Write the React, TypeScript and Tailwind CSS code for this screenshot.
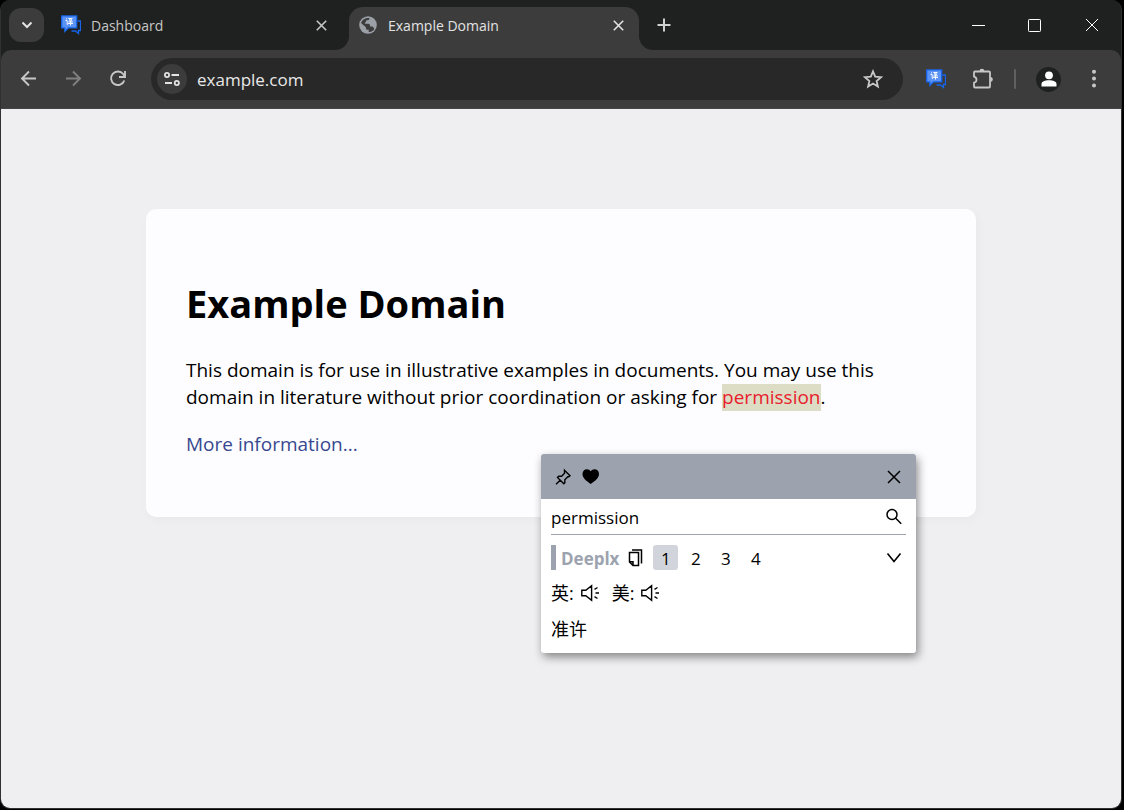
import type { ReactNode } from "react";

function TranslateLogo() {
  return (
    <svg viewBox="0 0 20 20" className="size-5 shrink-0" aria-hidden="true">
      <path d="M16.500 6h3v9.500h-2v3l-3-2.500H10.500" fill="none" stroke="#1765ea" strokeWidth="1.300" />
      <path d="M.700.900h15v12H7.500l-3.700 3.600v-3.600H.7z" fill="#5b92f5" stroke="#1765ea" strokeWidth="1.300" />
      <g stroke="#f2f6ff" strokeWidth="1" fill="none">
        <path d="M5 3.500l1 .8M4.500 5.500h1.700v4l1-.7M7.300 3.500h4L8 6.300M8 4l3.500 2.400M7.300 7h4.300M7 8.500h5M9.500 6v4.500" />
      </g>
    </svg>
  );
}

function Globe() {
  return (
    <svg viewBox="0 0 18 18" className="size-[18px] shrink-0" aria-hidden="true">
      <circle cx="9" cy="9" r="8.800" fill="#9aa0a6" />
      <path
        d="M2.300 6.300C3.500 3.500 6 1.900 9 1.900h1.500c0 1.700-.8 2.400-2.500 2.400-.8 0-1 .5-1 1.200s-.4 1-1.100 1v1.300h3.300c1.200 0 1.900.8 1.900 2v.7h1.700c1 0 1.600.5 1.900 1.500l.6 1.200c-1.300 1.800-3.300 2.900-5.600 2.900v-2.400H8.300c-.8 0-1.400-.6-1.400-1.400v-1L2.300 7.200z"
        fill="#3c3c3c"
      />
    </svg>
  );
}

function Cross({ className }: { className: string }) {
  return (
    <svg viewBox="0 0 14 14" className={className} fill="none" stroke="currentColor" aria-hidden="true">
      <path d="M1 1l12 12M13 1L1 13" />
    </svg>
  );
}

function IconButton({ label, className = "", children }: { label: string; className?: string; children: ReactNode }) {
  return (
    <button type="button" aria-label={label} className={`flex shrink-0 items-center justify-center ${className}`}>
      {children}
    </button>
  );
}

function Flare({ side }: { side: "left" | "right" }) {
  return (
    <svg
      viewBox="0 0 14 14"
      className={`absolute bottom-0 size-3.5 ${side === "left" ? "-left-3.5" : "-right-3.5"}`}
      aria-hidden="true"
    >
      <path d={side === "left" ? "M14 0v14H0A14 14 0 0 0 14 0z" : "M0 0v14h14A14 14 0 0 1 0 0z"} fill="#3c3c3c" />
    </svg>
  );
}

function TabStrip() {
  return (
    <header className="flex h-[50px] items-center bg-[#1f2120] pl-2">
      <IconButton label="Search tabs" className="h-[34px] w-[35px] rounded-xl bg-[#3c3c3c] text-[#e3e3e3]">
        <svg viewBox="0 0 12 12" className="size-3" fill="none" stroke="currentColor" strokeWidth="2" aria-hidden="true">
          <path d="M1.500 3.500L6 8l4.500-4.500" />
        </svg>
      </IconButton>
      <div className="ml-[17px] flex h-full w-[270px] items-center text-[#c7c7c7]">
        <TranslateLogo />
        <span className="ml-[10px] flex-1 pt-0.5 text-sm">Dashboard</span>
        <IconButton label="Close Dashboard" className="size-5">
          <Cross className="size-[11px] stroke-2" />
        </IconButton>
      </div>
      <div className="relative ml-[18px] flex h-[43px] w-[290px] items-center self-end rounded-t-[14px] bg-[#3c3c3c] pr-[11px] pb-[7px] pl-[10px] text-[#e3e3e3]">
        <Flare side="left" />
        <Globe />
        <span className="ml-[11px] flex-1 pt-0.5 text-sm">Example Domain</span>
        <IconButton label="Close Example Domain" className="size-5">
          <Cross className="size-[11px] stroke-2" />
        </IconButton>
        <Flare side="right" />
      </div>
      <IconButton label="New tab" className="ml-[15px] size-5 text-[#d0d0d0]">
        <svg viewBox="0 0 14 14" className="size-3.5" fill="none" stroke="currentColor" strokeWidth="2" aria-hidden="true">
          <path d="M7 .500v13M.500 7h13" />
        </svg>
      </IconButton>
      <div className="ml-auto flex h-full text-white">
        <IconButton label="Minimize" className="w-14">
          <svg viewBox="0 0 14 14" className="size-3.5" aria-hidden="true">
            <path d="M0 7.500h13" stroke="currentColor" />
          </svg>
        </IconButton>
        <IconButton label="Maximize" className="w-14">
          <svg viewBox="0 0 14 14" className="size-3.5" fill="none" stroke="currentColor" aria-hidden="true">
            <rect x=".5" y="1.500" width="12" height="12" rx=".8" />
          </svg>
        </IconButton>
        <IconButton label="Close" className="w-[58px]">
          <Cross className="size-3.5" />
        </IconButton>
      </div>
    </header>
  );
}

function Toolbar() {
  return (
    <nav className="flex h-[59px] items-center rounded-t-[10px] border-b border-[#444444] bg-[#3c3c3c] pl-[18px] text-[#c7c7c7]">
      <IconButton label="Back" className="size-5">
        <svg viewBox="0 0 20 20" className="size-5" fill="none" stroke="currentColor" strokeWidth="1.900" aria-hidden="true">
          <path d="M17 9.500H3.500M10 2.500l-7 7 7 7" />
        </svg>
      </IconButton>
      <IconButton label="Forward" className="ml-6 size-5 text-[#808080]">
        <svg viewBox="0 0 20 20" className="size-5" fill="none" stroke="currentColor" strokeWidth="1.900" aria-hidden="true">
          <path d="M3 9.500h13.500M10 2.500l7 7-7 7" />
        </svg>
      </IconButton>
      <IconButton label="Reload" className="ml-[25px] size-5">
        <svg viewBox="0 0 20 20" className="size-5" fill="none" stroke="currentColor" strokeWidth="1.900" aria-hidden="true">
          <path d="M16.300 11.500A6.800 6.800 0 1 1 15.200 5L16.500 7M17 2V8H11" />
        </svg>
      </IconButton>
      <div className="ml-[23px] flex h-[42px] flex-1 items-center rounded-full bg-[#282828] pr-5 pl-1.5">
        <IconButton label="View site information" className="size-[30px] rounded-full bg-[#3c3c3c] text-[#e3e3e3]">
          <svg viewBox="0 0 16 16" className="size-4" fill="none" stroke="currentColor" strokeWidth="1.800" aria-hidden="true">
            <circle cx="3" cy="4" r="2.100" />
            <path d="M7.500 4H15M1 12h7" />
            <circle cx="12.800" cy="12" r="2.100" />
          </svg>
        </IconButton>
        <input
          aria-label="Address"
          defaultValue="example.com"
          className="ml-[10px] min-w-0 flex-1 bg-transparent pt-0.5 text-[17px] text-[#e8e8e8] outline-none"
        />
        <IconButton label="Bookmark this tab" className="size-5">
          <svg viewBox="0 0 20 20" className="size-5" fill="none" stroke="currentColor" strokeWidth="1.800" aria-hidden="true">
            <path d="M10 2.300l2.200 5.400 5.800.5-4.400 3.800 1.300 5.600L10 14.600l-4.900 3 1.300-5.600L2 8.200l5.800-.5z" />
          </svg>
        </IconButton>
      </div>
      <IconButton label="Translate extension" className="ml-[23px] size-5">
        <TranslateLogo />
      </IconButton>
      <IconButton label="Extensions" className="ml-[25px] size-[22px]">
        <svg viewBox="0 0 22 22" className="size-[22px]" aria-hidden="true">
          <path
            d="M4 3.500h14c.6 0 1 .4 1 1v14c0 .6-.4 1-1 1H4c-.6 0-1-.4-1-1v-3.800c3.300-.8 3.300-5.200 0-6V4.500c0-.6.4-1 1-1z"
            fill="none"
            stroke="currentColor"
            strokeWidth="1.800"
            strokeLinejoin="round"
          />
          <path d="M8.500 3.200a2.400 2.400 0 0 1 4.800 0zM19.300 9a2.500 2.500 0 0 1 0 5z" fill="currentColor" />
        </svg>
      </IconButton>
      <span className="ml-[21px] h-5 w-0.5 rounded-full bg-[#606060]" />
      <IconButton label="Profile" className="ml-5 size-[25px] rounded-full bg-[#1f2120] text-white">
        <svg viewBox="0 0 16 16" className="size-4" fill="currentColor" aria-hidden="true">
          <circle cx="8" cy="4.300" r="3.900" />
          <path d="M.5 15.500V13C.5 10.500 4 9.300 8 9.300s7.500 1.200 7.500 3.700v2.500z" />
        </svg>
      </IconButton>
      <IconButton label="Menu" className="mr-[17px] ml-[23px] size-5">
        <svg viewBox="0 0 20 20" className="size-5" fill="currentColor" aria-hidden="true">
          <circle cx="10" cy="2.700" r="2" />
          <circle cx="10" cy="9.600" r="2" />
          <circle cx="10" cy="16.400" r="2" />
        </svg>
      </IconButton>
    </nav>
  );
}

function Speaker() {
  return (
    <svg viewBox="0 0 20 20" className="size-5" fill="none" stroke="currentColor" strokeWidth="1.400" aria-hidden="true">
      <path d="M1.800 7.200h4l5.800-4.600v14.800L5.800 12.800h-4zM15.500 10h3.500M14.500 6.300l3-1.800M14.500 13.700l3 1.800" />
    </svg>
  );
}

const meanings = ["1", "2", "3", "4"];

function TranslatePopup() {
  return (
    <section
      aria-label="Translation"
      className="absolute top-[245px] left-[395px] w-[375px] overflow-hidden rounded-[3px] bg-white text-black shadow-[2px_4px_10px_rgba(0,0,0,0.45)]"
    >
      <div className="flex h-[45px] items-center bg-[#9ca3af] px-3">
        <IconButton label="Pin" className="size-5">
          <svg viewBox="0 0 20 20" className="size-5" fill="none" stroke="currentColor" strokeWidth="1.400" aria-hidden="true">
            <path d="M11.500 3.300l5.500 5.500-1.200 1-1-.1-3 3 .1 2.900-1.100 1.100-6.300-6.300 1.200-1.200 2.900.1 2.900-3v-1.500zM7.200 13.200l-4.200 4" />
          </svg>
        </IconButton>
        <IconButton label="Favorite" className="ml-2 size-5">
          <svg viewBox="0 0 20 20" className="size-5" fill="currentColor" aria-hidden="true">
            <path d="M9.700 17C5 13.700 1.500 10.800 1.500 7c0-2.900 2-4.700 4.400-4.700 1.700 0 3 .7 3.800 2 .9-1.300 2.200-2 3.900-2C16 2.300 18 4.100 18 7c0 3.800-3.500 6.700-8.300 10z" />
          </svg>
        </IconButton>
        <IconButton label="Close translation" className="ml-auto size-5">
          <Cross className="size-3.5 stroke-[1.5px]" />
        </IconButton>
      </div>
      <div className="px-[10px] pb-[11px] text-[17px]">
        <div className="flex h-9 items-center border-b border-[#9ca3af]">
          <input aria-label="Search word" defaultValue="permission" className="min-w-0 flex-1 bg-transparent pt-0.5 outline-none" />
          <IconButton label="Search" className="mr-0.5 size-5">
            <svg viewBox="0 0 20 20" className="size-5" fill="none" stroke="currentColor" strokeWidth="1.500" aria-hidden="true">
              <circle cx="8" cy="7.500" r="5" />
              <path d="M11.700 11.200l5.500 5.500" />
            </svg>
          </IconButton>
        </div>
        <div className="mt-[10px] flex h-[25px] items-center">
          <h2 className="flex h-full items-center border-l-[5px] border-[#9ca3af] pt-0.5 pl-[5px] font-bold text-[#9ca3af]">Deeplx</h2>
          <IconButton label="Copy" className="ml-[7px] size-5">
            <svg viewBox="0 0 20 20" className="size-5" fill="none" stroke="currentColor" strokeWidth="1.500" aria-hidden="true">
              <path d="M3.500 4.500h9v13H7l-3.500-3.500zM3.500 13.800H7v3.500M6 2h9.500v13.500" />
            </svg>
          </IconButton>
          <div className="ml-[7px] flex gap-[5px]">
            {meanings.map((n) => (
              <button
                key={n}
                type="button"
                className={`flex size-[25px] items-center justify-center rounded-[3px] pt-0.5 ${n === "1" ? "bg-[#d1d5db]" : ""}`}
              >
                {n}
              </button>
            ))}
          </div>
          <IconButton label="Collapse" className="mr-0.5 ml-auto size-5">
            <svg viewBox="0 0 20 20" className="size-5" fill="none" stroke="currentColor" strokeWidth="1.600" aria-hidden="true">
              <path d="M3.500 5.500L10 13.500l6.500-8" />
            </svg>
          </IconButton>
        </div>
        <div className="mt-[10px] flex h-[26px] items-center text-lg">
          <span>英:</span>
          <IconButton label="Play British pronunciation" className="mr-3 ml-[6px] size-5">
            <Speaker />
          </IconButton>
          <span>美:</span>
          <IconButton label="Play American pronunciation" className="ml-[6px] size-5">
            <Speaker />
          </IconButton>
        </div>
        <p className="mt-[10px] text-lg leading-[26px]">准许</p>
      </div>
    </section>
  );
}

export default function App() {
  return (
    <div className="min-h-screen bg-black pr-0.5 pb-px font-['Open_Sans','Noto_Sans_CJK_SC',sans-serif]">
      <div className="flex min-h-[calc(100vh-1px)] flex-col overflow-hidden rounded-[10px] border border-t-0 border-[#303231] bg-[#1f2120]">
        <TabStrip />
        <Toolbar />
        <main className="flex-1 bg-[#efeff1] px-4 pt-[100px] pb-10">
          <article className="relative mx-auto max-w-[830px] rounded-[10px] bg-[#fdfdff] px-10 pt-[41px] pb-[39px] text-[19px] leading-[27px] text-black shadow-[2px_3px_7px_2px_rgba(0,0,0,0.02)]">
            <h1 className="my-[27px] text-[38px] leading-[53px] font-bold">Example Domain</h1>
            <p className="my-5">
              This domain is for use in illustrative examples in documents. You may use this domain in literature without prior
              coordination or asking for <mark className="inline-block bg-[#ddddc5] text-[#e8202c]">permission</mark>.
            </p>
            <p className="my-5">
              <a href="https://www.iana.org/domains/example" className="text-[#38488f]">
                More information...
              </a>
            </p>
            <TranslatePopup />
          </article>
        </main>
      </div>
    </div>
  );
}
